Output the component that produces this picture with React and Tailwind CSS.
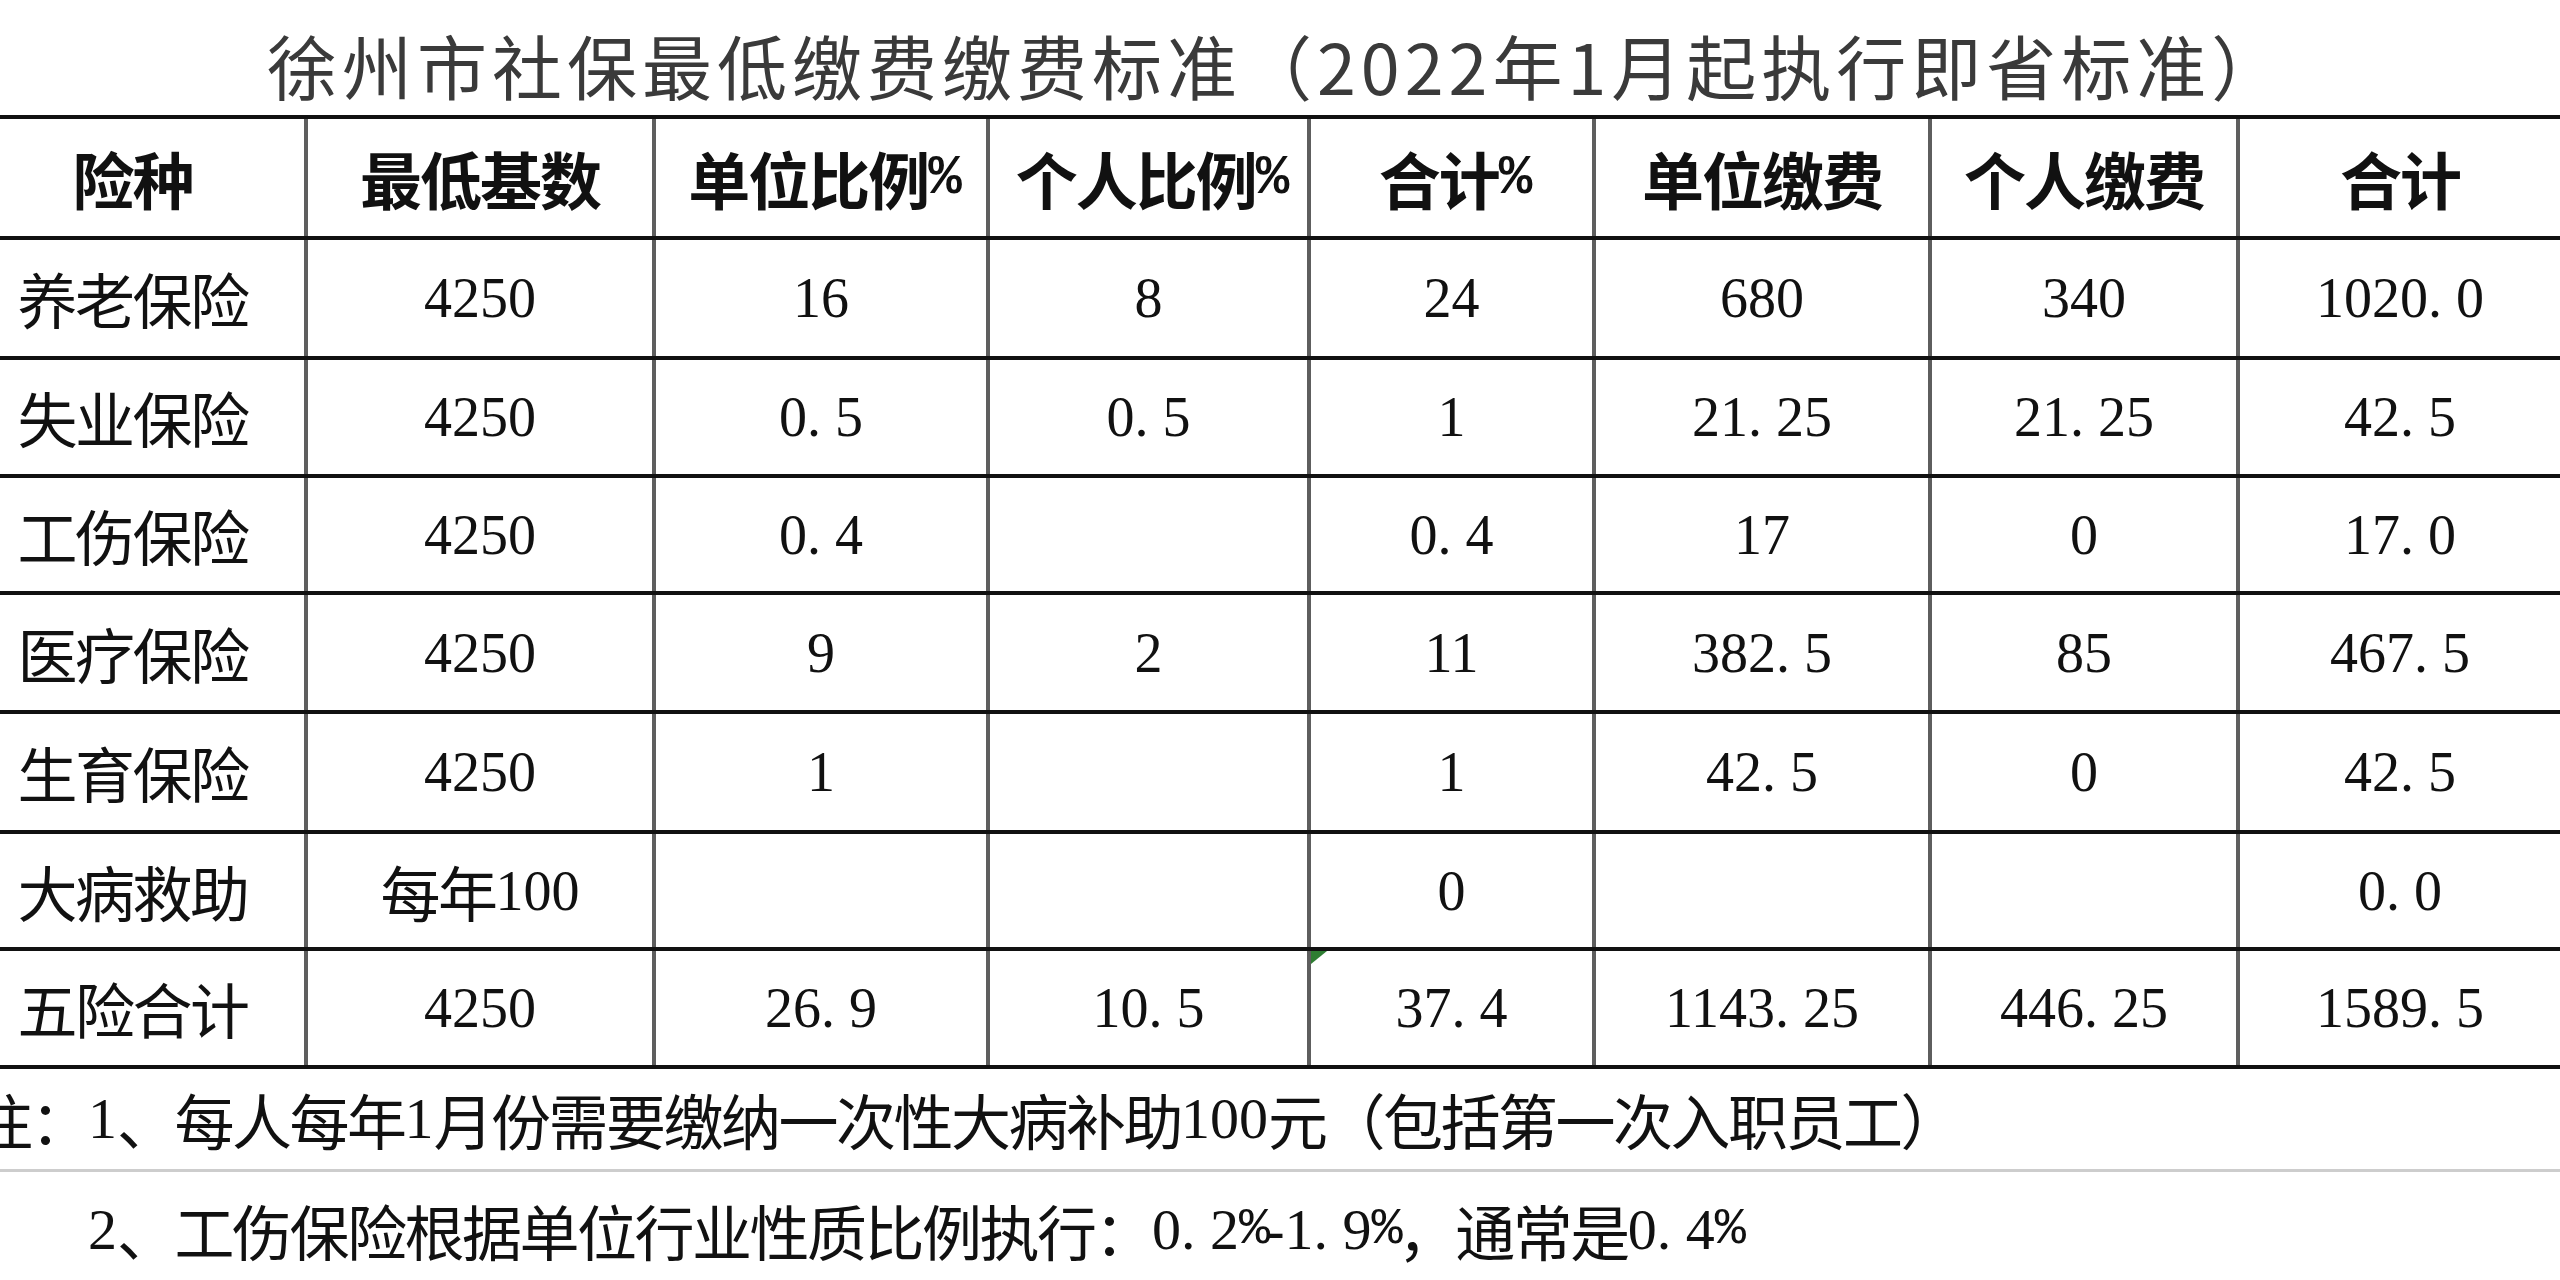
import React from "react";

const CJK = "font-['Noto_Sans_CJK_SC',sans-serif]";
const SERIF = "font-['Liberation_Serif',serif]";
const MONO = "font-['Liberation_Mono',monospace]";

const styles = {
  data: {
    cjk: `${CJK} text-[60px] tracking-[-2.5px]`,
    num: `${SERIF} text-[56px]`,
    dot: `${SERIF} text-[56px] tracking-[0.25em]`,
    pct: `${MONO} text-[50px] tracking-[-2px]`,
  },
  head: {
    cjk: `${CJK} font-bold text-[62px] tracking-[-2px]`,
    num: `${SERIF} font-bold text-[56px]`,
    dot: `${SERIF} font-bold text-[56px] tracking-[0.25em]`,
    pct: `${MONO} font-bold text-[56px] tracking-[-8px]`,
  },
  note: {
    cjk: `${CJK} text-[60px] tracking-[-2.5px]`,
    num: `${SERIF} text-[58px]`,
    dot: `${SERIF} text-[58px] tracking-[0.25em]`,
    pct: `${MONO} text-[52px] tracking-[-5px]`,
  },
};

function Mixed({ text, variant }) {
  const s = styles[variant];
  const parts = text.split(/([\x00-\x7F]+)/).filter(Boolean);
  return parts.map((p, i) => {
    if (!/^[\x00-\x7F]+$/.test(p)) {
      return (
        <span key={i} className={s.cjk}>
          {p}
        </span>
      );
    }
    const toks = p.split(/([.%])/).filter(Boolean);
    return (
      <React.Fragment key={i}>
        {toks.map((t, j) => (
          <span key={j} className={t === "." ? s.dot : t === "%" ? s.pct : s.num}>
            {t}
          </span>
        ))}
      </React.Fragment>
    );
  });
}

const GRID =
  "grid grid-cols-[343px_348px_334px_321px_285px_336px_308px_324px]";

const header = ["险种", "最低基数", "单位比例%", "个人比例%", "合计%", "单位缴费", "个人缴费", "合计"];

const rows = [
  { h: "h-[120px]", c: ["养老保险", "4250", "16", "8", "24", "680", "340", "1020.0"] },
  { h: "h-[118px]", c: ["失业保险", "4250", "0.5", "0.5", "1", "21.25", "21.25", "42.5"] },
  { h: "h-[117px]", c: ["工伤保险", "4250", "0.4", "", "0.4", "17", "0", "17.0"] },
  { h: "h-[119px]", c: ["医疗保险", "4250", "9", "2", "11", "382.5", "85", "467.5"] },
  { h: "h-[120px]", c: ["生育保险", "4250", "1", "", "1", "42.5", "0", "42.5"] },
  { h: "h-[117px]", c: ["大病救助", "每年100", "", "", "0", "", "", "0.0"] },
];

const totalRow = ["五险合计", "4250", "26.9", "10.5", "37.4", "1143.25", "446.25", "1589.5"];

function Cell({ i, children }) {
  return (
    <div
      className={
        "relative flex items-center justify-center leading-none whitespace-nowrap text-[#111] " +
        (i > 0 ? "border-l-4 border-[#5e5e5e]" : "")
      }
    >
      {children}
    </div>
  );
}

export default function App() {
  return (
    <div className="w-[2560px] h-[1280px] overflow-hidden bg-white">
      {/* Title */}
      <div className="h-[115px] flex items-center pt-[15px] pl-[267px] leading-none">
        <span className={`${CJK} text-[70px] tracking-[5px] text-[#3a3a3a] whitespace-nowrap`}>
          徐州市社保最低缴费缴费标准（2022年1月起执行即省标准）
        </span>
      </div>

      {/* Table */}
      <div className="-ml-[39px] w-[2599px]">
        <div className={`${GRID} h-[121px] border-t-4 border-[#111]`}>
          {header.map((t, i) => (
            <Cell key={i} i={i}>
              <Mixed text={t} variant="head" />
            </Cell>
          ))}
        </div>
        {rows.map((r, ri) => (
          <div key={ri} className={`${GRID} ${r.h} border-t-4 border-[#111]`}>
            {r.c.map((t, i) => (
              <Cell key={i} i={i}>
                <Mixed text={t} variant="data" />
              </Cell>
            ))}
          </div>
        ))}
        <div className={`${GRID} h-[122px] border-t-4 border-b-4 border-[#111]`}>
          {totalRow.map((t, i) => (
            <Cell key={i} i={i}>
              {i === 4 && (
                <svg className="absolute top-0 left-0" width="16" height="13" viewBox="0 0 16 13">
                  <polygon points="0,0 16,0 0,13" fill="#2e7d32" />
                </svg>
              )}
              <Mixed text={t} variant="data" />
            </Cell>
          ))}
        </div>
      </div>

      {/* Notes */}
      <div className="h-[100px] flex items-center -ml-[27px] leading-none whitespace-nowrap text-[#111] border-b-[3px] border-[#cdcdcd] box-content">
        <Mixed text="注：1、每人每年1月份需要缴纳一次性大病补助100元（包括第一次入职员工）" variant="note" />
      </div>
      <div className="h-[100px] flex items-center pt-[8px] pl-[88px] leading-none whitespace-nowrap text-[#111] border-b-[3px] border-[#cdcdcd] box-content">
        <Mixed text="2、工伤保险根据单位行业性质比例执行：0.2%-1.9%，通常是0.4%" variant="note" />
      </div>
    </div>
  );
}
